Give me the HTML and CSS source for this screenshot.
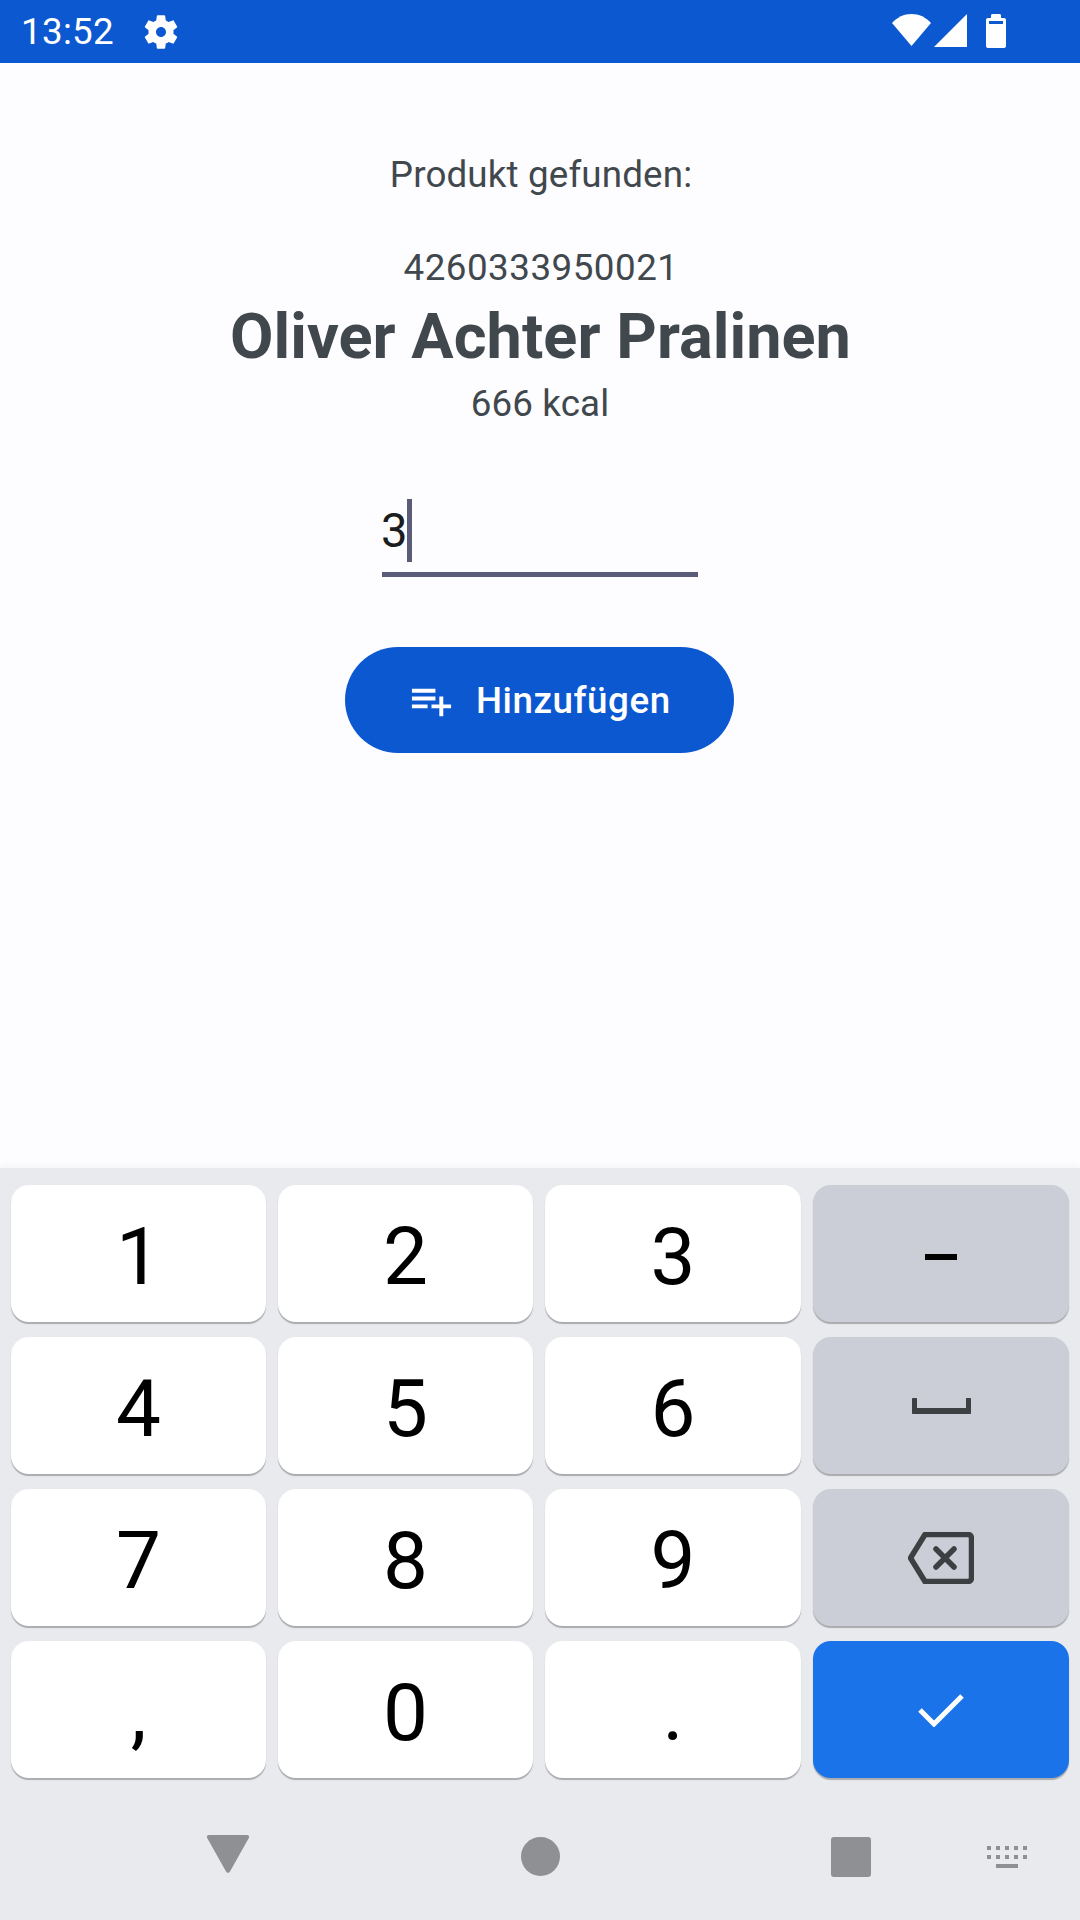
FILE: index.html
```html
<!DOCTYPE html>
<html lang="de">
<head>
  <meta charset="UTF-8">
  <title>Produkt gefunden</title>
  <link rel="stylesheet" href="styles.css">
</head>
<body>
  <div class="screen">
    <div class="status-bar">
      <span class="clock">13:52</span>
      <svg class="icon-gear" viewBox="0 0 24 24"><path fill-rule="evenodd" d="M19.43 12.98c.04-.32.07-.64.07-.98s-.03-.66-.07-.98l2.11-1.65c.19-.15.24-.42.12-.64l-2-3.46c-.12-.22-.39-.3-.61-.22l-2.49 1c-.52-.4-1.08-.73-1.69-.98l-.38-2.65C14.46 2.18 14.25 2 14 2h-4c-.25 0-.46.18-.49.42l-.38 2.65c-.61.25-1.17.59-1.69.98l-2.49-1c-.23-.09-.49 0-.61.22l-2 3.46c-.13.22-.07.49.12.64l2.11 1.65c-.04.32-.07.65-.07.98s.03.66.07.98l-2.11 1.65c-.19.15-.24.42-.12.64l2 3.46c.12.22.39.3.61.22l2.49-1c.52.4 1.08.73 1.69.98l.38 2.65c.03.24.24.42.49.42h4c.25 0 .46-.18.49-.42l.38-2.65c.61-.25 1.17-.59 1.69-.98l2.49 1c.23.09.49 0 .61-.22l2-3.46c.12-.22.07-.49-.12-.64l-2.11-1.65zM12 15c-1.65 0-3-1.35-3-3s1.35-3 3-3 3 1.35 3 3-1.35 3-3 3z"/></svg>
      <div class="status-right">
        <svg class="icon-wifi" viewBox="0 0 39 32"><path d="M0 9C5 3.300 12 0 19.500 0S34 3.300 39 9L19.500 32z"/></svg>
        <svg class="icon-signal" viewBox="0 0 33 33"><path d="M0 33 33 0v33z"/></svg>
        <svg class="icon-battery" viewBox="0 0 20 34"><path fill-rule="evenodd" d="M5 4V1.500C5 .7 5.700 0 6.500 0h7c.8 0 1.500.7 1.500 1.500V4h3c1.100 0 2 .9 2 2v26c0 1.100-.9 2-2 2H2c-1.100 0-2-.9-2-2V6c0-1.100.9-2 2-2zM3 7v3h14V7z"/></svg>
      </div>
    </div>

    <div class="content">
      <p class="found-label">Produkt gefunden:</p>
      <p class="barcode">4260333950021</p>
      <h1 class="product-name">Oliver Achter Pralinen</h1>
      <p class="kcal">666 kcal</p>

      <div class="amount-field">
        <span class="amount-value">3</span><span class="cursor"></span>
      </div>

      <button class="add-button">
        <svg class="icon-add" viewBox="0 0 24 24"><path d="M14 10H2v2h12v-2zm0-4H2v2h12V6zm4 8v-4h-2v4h-4v2h4v4h2v-4h4v-2h-4zM2 16h8v-2H2v2z"/></svg>
        <span>Hinzufügen</span>
      </button>
    </div>

    <div class="keyboard">
      <div class="keys">
        <div class="key">1</div>
        <div class="key">2</div>
        <div class="key">3</div>
        <div class="key key-gray"><span class="dash"></span></div>
        <div class="key">4</div>
        <div class="key">5</div>
        <div class="key">6</div>
        <div class="key key-gray">
          <svg class="icon-space" viewBox="0 0 59 16"><path d="M1 0h3c.6 0 1 .4 1 1v9h49V1c0-.6.4-1 1-1h3c.6 0 1 .4 1 1v14c0 .6-.4 1-1 1H1c-.6 0-1-.4-1-1V1c0-.6.4-1 1-1z"/></svg>
        </div>
        <div class="key">7</div>
        <div class="key">8</div>
        <div class="key">9</div>
        <div class="key key-gray">
          <svg class="icon-backspace" viewBox="0 0 66 52"><path class="outline" d="M17 2.500h43c2 0 3.500 1.500 3.500 3.500v40c0 2-1.500 3.500-3.500 3.500H17L2.500 26z"/><path class="outline" d="M28 17l18 18M46 17 28 35"/></svg>
        </div>
        <div class="key">,</div>
        <div class="key">0</div>
        <div class="key">.</div>
        <div class="key key-blue">
          <svg class="icon-check" viewBox="0 0 46 34"><path d="M2 17l14 14L44 3"/></svg>
        </div>
      </div>

      <div class="nav-bar">
        <svg class="nav-back" viewBox="0 0 44 38"><path d="M1.200 3C.4 1.400 1.200 0 3 0h38c1.800 0 2.600 1.400 1.800 3L24 36.500c-.9 1.800-3.100 1.800-4 0z"/></svg>
        <span class="nav-home"></span>
        <span class="nav-recent"></span>
        <svg class="nav-keyboard" viewBox="0 0 40 22">
          <path d="M0 0h4v4H0zM9 0h4v4H9zM18 0h4v4h-4zM27 0h4v4h-4zM36 0h4v4h-4zM0 9h4v4H0zM9 9h4v4H9zM18 9h4v4h-4zM27 9h4v4h-4zM36 9h4v4h-4zM9 18h22v4H9z"/>
        </svg>
      </div>
    </div>
  </div>
</body>
</html>
```

FILE: styles.css
```css
* {
  box-sizing: border-box;
}

body {
  margin: 0;
  font-family: Roboto, "Liberation Sans", sans-serif;
  background-color: #fdfcff;
}

p, h1 {
  margin: 0;
}

.screen {
  display: flex;
  flex-direction: column;
  width: 1080px;
  height: 1920px;
  overflow: hidden;
}

/* status bar */
.status-bar {
  display: flex;
  align-items: center;
  height: 63px;
  padding-left: 21px;
  background-color: #0b58d0;
  color: #fff;
}

.clock {
  font-size: 36.75px;
  line-height: 63px;
  letter-spacing: 0.3px;
}

.icon-gear {
  width: 40px;
  height: 40px;
  margin-left: 27px;
  fill: #fff;
}

.status-right {
  display: flex;
  align-items: flex-start;
  margin-left: auto;
  padding: 14px 74px 0 0;
  height: 63px;
}

.status-right svg {
  display: block;
  fill: #fff;
}

.icon-wifi {
  width: 39px;
  height: 32px;
}

.icon-signal {
  width: 33px;
  height: 33px;
  margin-left: 3px;
}

.icon-battery {
  width: 20px;
  height: 34px;
  margin-left: 19px;
}

/* product info */
.content {
  flex: 1;
  display: flex;
  flex-direction: column;
  align-items: center;
  padding-top: 88px;
  color: #41484d;
  text-align: center;
}

.found-label,
.barcode,
.kcal {
  font-size: 36.75px;
  line-height: 48px;
  letter-spacing: 0.15px;
}

.found-label {
  margin-left: 2px;
}

.barcode {
  margin-top: 45px;
  margin-left: 2px;
  letter-spacing: 0.5px;
}

.product-name {
  margin-top: 3px;
  margin-left: 1px;
  font-size: 63px;
  line-height: 84px;
  font-weight: 700;
  letter-spacing: 0.05px;
}

.kcal {
  margin-top: 1px;
}

.amount-field {
  display: flex;
  width: 316px;
  height: 79px;
  margin-top: 70px;
  border-bottom: 5px solid #5b5d78;
  color: #1a1c1e;
  text-align: left;
}

.amount-value {
  margin-left: -1px;
  font-size: 47.25px;
  line-height: 66px;
}

.cursor {
  width: 5px;
  height: 63px;
  margin-top: 1px;
  margin-left: -1px;
  background-color: #5b5d78;
}

.add-button {
  display: flex;
  align-items: center;
  width: 389px;
  height: 106px;
  margin-top: 70px;
  margin-left: -1px;
  padding: 0 0 0 63px;
  border: none;
  border-radius: 53px;
  background-color: #0b58d0;
  color: #fff;
  font-family: inherit;
  font-size: 36.75px;
  font-weight: 500;
  letter-spacing: 0.55px;
}

.icon-add {
  width: 47px;
  height: 47px;
  margin-right: 21px;
  fill: #fff;
}

/* keyboard */
.keyboard {
  height: 752px;
  background-color: #e8eaed;
  box-shadow: 0 -3px 6px rgba(0, 0, 0, 0.03);
}

.keys {
  display: grid;
  grid-template-columns: 255px 255px 256px 256px;
  grid-auto-rows: 137px;
  gap: 15px 12px;
  padding: 17px 11px 0;
}

.key {
  display: flex;
  align-items: center;
  justify-content: center;
  padding-top: 6px;
  border-radius: 18px;
  background-color: #fff;
  box-shadow: 0 2px 1px #a9abaf;
  color: #000;
  font-size: 80px;
}

.key svg {
  margin-bottom: 5px;
}

.key-gray {
  background-color: #cbced6;
}

.key-blue {
  background-color: #1a73e8;
}

.dash {
  width: 32px;
  height: 6px;
  background-color: #000;
}

.icon-space {
  width: 59px;
  height: 16px;
  fill: #3c4043;
}

.icon-backspace {
  width: 66px;
  height: 52px;
}

.outline {
  fill: none;
  stroke: #3c4043;
  stroke-width: 5.5;
  stroke-linejoin: round;
  stroke-linecap: round;
}

.icon-check {
  width: 46px;
  height: 34px;
  fill: none;
  stroke: #fff;
  stroke-width: 5;
}

.nav-bar {
  position: relative;
  height: 142px;
}

.nav-bar > * {
  position: absolute;
}

.nav-back {
  left: 206px;
  top: 57px;
  width: 44px;
  height: 38px;
  fill: #8f9093;
}

.nav-home {
  left: 521px;
  top: 59px;
  width: 39px;
  height: 39px;
  border-radius: 50%;
  background-color: #8f9093;
}

.nav-recent {
  left: 831px;
  top: 59px;
  width: 40px;
  height: 40px;
  border-radius: 3px;
  background-color: #8f9093;
}

.nav-keyboard {
  left: 987px;
  top: 68px;
  width: 40px;
  height: 22px;
  fill: #8f9093;
}
```
